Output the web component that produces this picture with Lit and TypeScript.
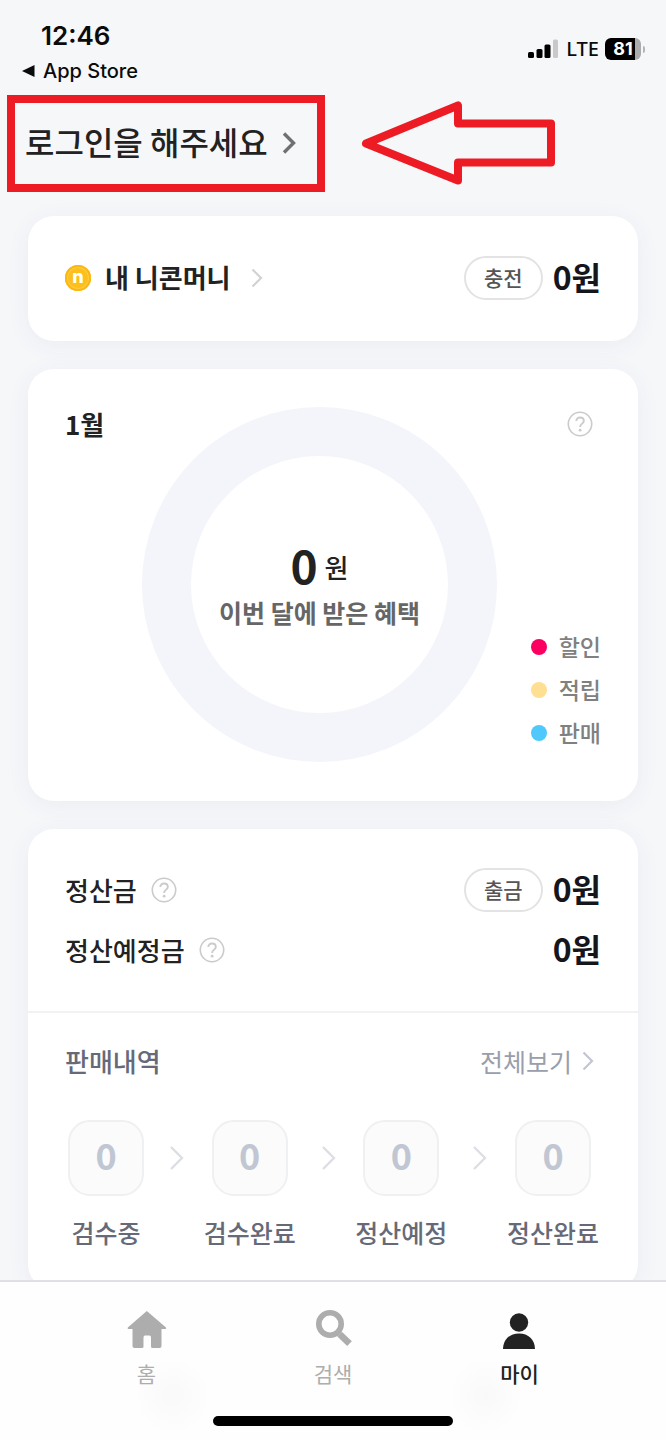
import { LitElement, html, css, svg } from "lit";
import { customElement, property } from "lit/decorators.js";

type ChevronSize = "small" | "medium" | "large";

@customElement("chevron-icon")
class ChevronIcon extends LitElement {
  @property() size: ChevronSize = "medium";

  static styles = css`
    :host {
      display: block;
      flex: none;
    }
    svg {
      display: block;
      fill: none;
      stroke: currentColor;
    }
  `;

  render() {
    if (this.size === "large") {
      return html`<svg width="14" height="22" viewBox="0 0 14 22" stroke-width="3.400" aria-hidden="true">
        <path d="M2 1.500 L11.500 11 L2 20.500" />
      </svg>`;
    }
    if (this.size === "small") {
      return html`<svg width="12" height="20" viewBox="0 0 12 20" stroke-width="2.200" aria-hidden="true">
        <path d="M1.500 1.500 L10 10 L1.500 18.500" />
      </svg>`;
    }
    return html`<svg width="14" height="24" viewBox="0 0 14 24" stroke-width="2.300" aria-hidden="true">
      <path d="M1 1 L12 12 L1 23" />
    </svg>`;
  }
}

@customElement("help-button")
class HelpButton extends LitElement {
  @property() label = "";

  static styles = css`
    :host {
      display: block;
      flex: none;
    }
    button {
      display: block;
      padding: 0;
      border: 0;
      background: none;
      cursor: pointer;
    }
    svg {
      display: block;
      fill: none;
      stroke: #cbcbcb;
    }
  `;

  render() {
    return html`<button type="button" aria-label=${this.label}>
      <svg width="26" height="26" viewBox="0 0 26 26" aria-hidden="true">
        <circle cx="13" cy="13" r="11.700" stroke-width="1.600" />
        <path d="M9.300 10 C9.300 7.700 11 6.500 13 6.500 C15.200 6.500 16.800 7.900 16.800 9.900 C16.800 12.600 13.100 12.700 13.100 16" stroke-width="1.900" />
        <circle cx="13.100" cy="19.200" r="1.400" fill="#cbcbcb" stroke="none" />
      </svg>
    </button>`;
  }
}

@customElement("status-bar")
class StatusBar extends LitElement {
  static styles = css`
    :host {
      display: flex;
      justify-content: space-between;
      height: 95px;
      padding: 20px 21px 0 22px;
      box-sizing: border-box;
      font-family: Inter, "Liberation Sans", sans-serif;
      color: #0b0b0c;
    }
    .time {
      padding-left: 19px;
      font-size: 26px;
      line-height: 32px;
      font-weight: 600;
    }
    .back {
      display: flex;
      align-items: center;
      gap: 8px;
      margin-top: 7px;
      font-size: 20px;
      line-height: 24px;
      font-weight: 500;
      color: inherit;
      text-decoration: none;
    }
    .signals {
      display: flex;
      align-items: center;
      height: 24px;
      margin-top: 17px;
    }
    .network {
      margin: 0 6px 0 8px;
      font-family: "Noto Sans", sans-serif;
      font-size: 20px;
      line-height: 24px;
      font-weight: 500;
    }
    .battery {
      width: 36px;
      border-radius: 6px;
      background: linear-gradient(to right, #000 30px, #ababad 30px);
      color: #fff;
      font-size: 18px;
      line-height: 22px;
      font-weight: 700;
      text-align: center;
    }
    .nub {
      width: 2px;
      height: 7px;
      margin-left: 2px;
      border-radius: 0 2px 2px 0;
      background: #b5b5b8;
    }
  `;

  render() {
    return html`
      <div>
        <div class="time">12:46</div>
        <a class="back" href="#">
          <svg width="13" height="12" viewBox="0 0 13 12" aria-hidden="true">
            <path d="M12.500 0 V12 L0 6 Z" fill="currentColor" />
          </svg>
          App Store
        </a>
      </div>
      <div class="signals">
        <svg width="30" height="20" viewBox="0 0 30 20" aria-hidden="true">
          <rect x="0" y="13" width="6" height="6" rx="1.500" />
          <rect x="8.500" y="10" width="6" height="9" rx="1.500" />
          <rect x="16.500" y="5.500" width="6" height="13.500" rx="1.500" />
          <rect x="25" y="0.500" width="5" height="18.500" rx="1.500" fill="#c9c9cb" />
        </svg>
        <span class="network">LTE</span>
        <span class="battery">81</span>
        <span class="nub"></span>
      </div>
    `;
  }
}

const navIcons = {
  home: svg`<path d="M19.800 1 L39 17.500 Q39.800 18.800 38.300 19 H34.500 V36 Q34.500 38 32.500 38 H25.500 Q24 38 24 36.500 V27.500 Q24 25.500 22.500 25.500 H18 Q16.500 25.500 16.500 27.500 V36.500 Q16.500 38 15 38 H7.500 Q5.500 38 5.500 36 V19 H1.500 Q0 18.800 0.800 17.500 Z" />`,
  search: svg`<circle cx="17" cy="14" r="11.200" fill="none" stroke="currentColor" stroke-width="5.600" />
    <path d="M24.500 22.500 L26.500 24.300" stroke="currentColor" stroke-width="5" />
    <path d="M26.600 24.200 L36.500 33.700" stroke="currentColor" stroke-width="6.600" />`,
  my: svg`<circle cx="20" cy="12.500" r="9.200" />
    <path d="M4 39 C4.300 29.500 10.500 23.500 20 23.500 C29.500 23.500 35.700 29.500 36 39 Z" />`,
};

@customElement("tab-bar")
class TabBar extends LitElement {
  static styles = css`
    :host {
      display: block;
      flex: none;
      border-top: 2px solid #dfe0e5;
      background:
        radial-gradient(circle at 26% 72%, #f9f9f9, #fefefe00 38px),
        radial-gradient(circle at 73% 72%, #f9f9f9, #fefefe00 38px),
        #fefefe;
    }
    nav {
      display: grid;
      grid-template-columns: repeat(3, 1fr);
      padding: 28px 8% 0;
    }
    .tab {
      display: flex;
      flex-direction: column;
      align-items: center;
      gap: 7px;
      color: #adadad;
      font-size: 21px;
      line-height: 32px;
      text-decoration: none;
    }
    .current {
      color: #222;
      font-weight: 500;
    }
    svg {
      display: block;
      fill: currentColor;
    }
    .indicator {
      width: 36%;
      height: 10px;
      margin: 27px auto 14px;
      border-radius: 5px;
      background: #000;
    }
  `;

  render() {
    const tabs = [
      { icon: navIcons.home, label: "홈", current: false },
      { icon: navIcons.search, label: "검색", current: false },
      { icon: navIcons.my, label: "마이", current: true },
    ];
    return html`
      <nav>
        ${tabs.map(
          (t) => html`<a class="tab ${t.current ? "current" : ""}" href="#" aria-current=${t.current ? "page" : "false"}>
            <svg width="40" height="40" viewBox="0 0 40 40" aria-hidden="true">${t.icon}</svg>
            ${t.label}
          </a>`
        )}
      </nav>
      <div class="indicator"></div>
    `;
  }
}

@customElement("app-root")
class AppRoot extends LitElement {
  static styles = css`
    :host {
      display: flex;
      flex-direction: column;
      height: 100vh;
      background: #f6f7f9;
      color: #222;
      font-family: "Noto Sans CJK KR", "Noto Sans", sans-serif;
    }
    main {
      flex: 1;
      min-height: 0;
      overflow-y: auto;
      scrollbar-width: none;
    }
    a {
      color: inherit;
      text-decoration: none;
    }
    button {
      font-family: inherit;
      cursor: pointer;
    }
    h1,
    h2 {
      margin: 0;
      font-size: 26px;
      line-height: 40px;
    }
    .top {
      display: flex;
      align-items: center;
      gap: 35px;
      padding-left: 7px;
    }
    .login {
      display: flex;
      align-items: center;
      gap: 14px;
      padding: 16px 21px 17px 10px;
      border: 8px solid #ed1c24;
    }
    .login h1 {
      padding-bottom: 4px;
      font-size: 32px;
      line-height: 44px;
      font-weight: 500;
    }
    .login chevron-icon {
      color: #707070;
    }
    .cards {
      display: flex;
      flex-direction: column;
      gap: 28px;
      padding: 24px 28px 28px;
    }
    .card {
      border-radius: 26px;
      background: #fff;
      box-shadow: 0 4px 24px rgba(70, 75, 130, 0.06);
    }
    .row {
      display: flex;
      align-items: center;
      justify-content: space-between;
    }
    .money {
      padding: 32px 37px 33px;
    }
    .row-link,
    .value {
      display: flex;
      align-items: center;
    }
    .row-link {
      gap: 14px;
    }
    .money h2 {
      margin-right: 6px;
      padding-bottom: 2px;
    }
    .row-link chevron-icon {
      color: #d2d2d2;
    }
    .coin {
      display: grid;
      place-items: center;
      width: 26px;
      height: 26px;
      border-radius: 50%;
      background: #fdbf1b;
      box-shadow: inset 0 0 0 2px #fbb812, inset 0 0 0 3px #fdcb45;
      color: #fff;
      font-family: Inter, sans-serif;
      font-size: 18px;
      line-height: 20px;
      font-weight: 800;
    }
    .coin span {
      padding-bottom: 3px;
    }
    .value {
      gap: 10px;
      min-height: 60px;
      color: #15161c;
      font-size: 32px;
      line-height: 48px;
      font-weight: 700;
    }
    .value span {
      padding-bottom: 4px;
    }
    .pill {
      padding: 3px 18px 5px;
      border: 2px solid #e3e3e3;
      border-radius: 22px;
      background: #fff;
      color: #555;
      font-size: 21px;
      line-height: 32px;
      font-weight: 500;
    }
    .benefit {
      display: grid;
      grid-template-columns: 77px minmax(0, 355px) 1fr;
      padding: 38px 37px 39px;
    }
    .benefit h2 {
      margin-top: -3px;
    }
    .donut {
      display: grid;
      place-items: center;
      aspect-ratio: 1;
      border: 49px solid #f4f5fb;
      border-radius: 50%;
      box-sizing: border-box;
      text-align: center;
      white-space: nowrap;
    }
    .donut-text {
      width: 0;
      display: flex;
      flex-direction: column;
      align-items: center;
      gap: 3px;
      padding-bottom: 7px;
    }
    .total {
      display: flex;
      align-items: center;
      gap: 7px;
      font-size: 26px;
      line-height: 52px;
      font-weight: 500;
    }
    .total strong {
      font-size: 46px;
      font-weight: 700;
    }
    .total span {
      padding-top: 6px;
    }
    .caption {
      color: #666;
      font-size: 25px;
      line-height: 32px;
      font-weight: 700;
    }
    .side {
      display: flex;
      flex-direction: column;
      align-items: flex-end;
      justify-content: space-between;
      padding: 4px 0 8px;
    }
    .side help-button {
      margin-right: 8px;
    }
    .legend {
      margin: 0;
      padding: 0;
      list-style: none;
      color: #808080;
      font-size: 23px;
      line-height: 43px;
      font-weight: 500;
    }
    .legend li {
      display: flex;
      align-items: center;
      gap: 12px;
    }
    .dot {
      width: 16px;
      height: 16px;
      border-radius: 50%;
    }
    .discount {
      background: #fb0061;
    }
    .saving {
      background: #ffdf92;
    }
    .sale {
      background: #4fc8fb;
    }
    .settle {
      padding: 31px 37px;
      border-bottom: 2px solid #f2f2f4;
    }
    .settle h2 {
      font-weight: 500;
    }
    .history {
      padding: 28px 37px 40px;
      color: #666a78;
    }
    .history h2 {
      font-weight: 500;
    }
    .all {
      display: flex;
      align-items: center;
      gap: 10px;
      padding-right: 7px;
      color: #999eac;
      font-size: 25px;
      line-height: 40px;
    }
    .all chevron-icon {
      color: #c3c6d1;
    }
    .steps {
      display: flex;
      margin: 39px 0 0;
      padding: 0 2px 0 3px;
      list-style: none;
    }
    .step {
      display: flex;
      flex-direction: column;
      align-items: center;
      gap: 18px;
      font-size: 25px;
      line-height: 36px;
      font-weight: 500;
      white-space: nowrap;
    }
    .count {
      width: 76px;
      padding-bottom: 8px;
      border: 2px solid #eff0f1;
      border-radius: 22px;
      box-sizing: border-box;
      background: #fbfbfb;
      color: #c1c6d3;
      font-size: 36px;
      line-height: 64px;
      font-weight: 700;
      text-align: center;
    }
    .next {
      display: flex;
      flex: 1;
      align-items: center;
      justify-content: center;
      height: 76px;
      padding-left: 6px;
      color: #dcdee4;
    }
  `;

  render() {
    const legend = [
      { kind: "discount", label: "할인" },
      { kind: "saving", label: "적립" },
      { kind: "sale", label: "판매" },
    ];
    const steps = ["검수중", "검수완료", "정산예정", "정산완료"];
    return html`
      <main>
        <status-bar></status-bar>
        <header class="top">
          <a class="login" href="#">
            <h1>로그인을 해주세요</h1>
            <chevron-icon size="large"></chevron-icon>
          </a>
          <svg width="196" height="86" viewBox="0 0 196 86" fill="none" stroke="#ed1c24" stroke-width="8" stroke-linejoin="round" aria-hidden="true">
            <path d="M6 42.500 L98 4.500 V22.500 H191 V61.500 H98 V79.500 Z" />
          </svg>
        </header>
        <div class="cards">
          <section class="card row money">
            <a class="row-link" href="#">
              <span class="coin"><span>n</span></span>
              <h2>내 니콘머니</h2>
              <chevron-icon size="small"></chevron-icon>
            </a>
            <div class="value">
              <button class="pill" type="button">충전</button>
              <span>0원</span>
            </div>
          </section>

          <section class="card benefit">
            <h2>1월</h2>
            <div class="donut">
              <div class="donut-text">
                <div class="total"><strong>0</strong><span>원</span></div>
                <div class="caption">이번 달에 받은 혜택</div>
              </div>
            </div>
            <div class="side">
              <help-button label="혜택 안내"></help-button>
              <ul class="legend">
                ${legend.map((l) => html`<li><span class="dot ${l.kind}"></span>${l.label}</li>`)}
              </ul>
            </div>
          </section>

          <section class="card">
            <div class="settle">
              <div class="row">
                <div class="row-link">
                  <h2>정산금</h2>
                  <help-button label="정산금 안내"></help-button>
                </div>
                <div class="value">
                  <button class="pill" type="button">출금</button>
                  <span>0원</span>
                </div>
              </div>
              <div class="row">
                <div class="row-link">
                  <h2>정산예정금</h2>
                  <help-button label="정산예정금 안내"></help-button>
                </div>
                <div class="value"><span>0원</span></div>
              </div>
            </div>
            <div class="history">
              <div class="row">
                <h2>판매내역</h2>
                <a class="all" href="#">전체보기<chevron-icon size="small"></chevron-icon></a>
              </div>
              <ol class="steps">
                ${steps.map(
                  (label, i) => html`
                    ${i ? html`<li class="next" aria-hidden="true"><chevron-icon></chevron-icon></li>` : ""}
                    <li class="step"><span class="count">0</span>${label}</li>
                  `
                )}
              </ol>
            </div>
          </section>
        </div>
      </main>
      <tab-bar></tab-bar>
    `;
  }
}
